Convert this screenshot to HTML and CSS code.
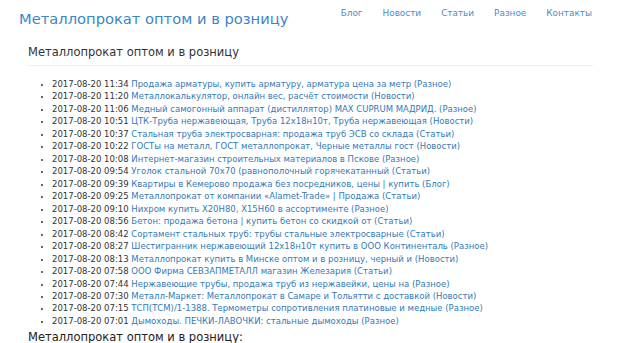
FILE: index.html
```html
<!DOCTYPE html>
<html lang="ru">
<head>
<meta charset="utf-8">
<title>Металлопрокат оптом и в розницу</title>
<link rel="stylesheet" href="styles.css">
</head>
<body>
<header class="top">
  <a class="brand" href="#">Металлопрокат оптом и в розницу</a>
  <nav class="nav">
    <a href="#">Блог</a>
    <a href="#">Новости</a>
    <a href="#">Статьи</a>
    <a href="#">Разное</a>
    <a href="#">Контакты</a>
  </nav>
</header>
<main class="content">
  <h2 class="head">Металлопрокат оптом и в розницу</h2>
  <ul class="posts">
    <li>2017-08-20 11:34 <a href="#">Продажа арматуры, купить арматуру, арматура цена за метр</a> <a href="#">(Разное)</a></li>
    <li>2017-08-20 11:20 <a href="#">Металлокалькулятор, онлайн вес, расчёт стоимости</a> <a href="#">(Новости)</a></li>
    <li>2017-08-20 11:06 <a href="#">Медный самогонный аппарат (дистиллятор) MAX CUPRUM МАДРИД.</a> <a href="#">(Разное)</a></li>
    <li>2017-08-20 10:51 <a href="#">ЦТК-Труба нержавеющая, Труба 12х18н10т, Труба нержавеющая</a> <a href="#">(Новости)</a></li>
    <li>2017-08-20 10:37 <a href="#">Стальная труба электросварная: продажа труб ЭСВ со склада</a> <a href="#">(Статьи)</a></li>
    <li>2017-08-20 10:22 <a href="#">ГОСТы на металл, ГОСТ металлопрокат, Черные металлы гост</a> <a href="#">(Новости)</a></li>
    <li>2017-08-20 10:08 <a href="#">Интернет-магазин строительных материалов в Пскове</a> <a href="#">(Разное)</a></li>
    <li>2017-08-20 09:54 <a href="#">Уголок стальной 70х70 (равнополочный горячекатанный</a> <a href="#">(Статьи)</a></li>
    <li>2017-08-20 09:39 <a href="#">Квартиры в Кемерово продажа без посредников, цены | купить</a> <a href="#">(Блог)</a></li>
    <li>2017-08-20 09:25 <a href="#">Металлопрокат от компании «Alamet-Trade» | Продажа</a> <a href="#">(Статьи)</a></li>
    <li>2017-08-20 09:10 <a href="#">Нихром купить Х20Н80, Х15Н60 в ассортименте</a> <a href="#">(Разное)</a></li>
    <li>2017-08-20 08:56 <a href="#">Бетон: продажа бетона | купить бетон со скидкой от</a> <a href="#">(Статьи)</a></li>
    <li>2017-08-20 08:42 <a href="#">Сортамент стальных труб: трубы стальные электросварные</a> <a href="#">(Статьи)</a></li>
    <li>2017-08-20 08:27 <a href="#">Шестигранник нержавеющий 12х18н10т купить в ООО Континенталь</a> <a href="#">(Разное)</a></li>
    <li>2017-08-20 08:13 <a href="#">Металлопрокат купить в Минске оптом и в розницу, черный и</a> <a href="#">(Новости)</a></li>
    <li>2017-08-20 07:58 <a href="#">ООО Фирма СЕВЗАПМЕТАЛЛ магазин Железария</a> <a href="#">(Статьи)</a></li>
    <li>2017-08-20 07:44 <a href="#">Нержавеющие трубы, продажа труб из нержавейки, цены на</a> <a href="#">(Разное)</a></li>
    <li>2017-08-20 07:30 <a href="#">Металл-Маркет: Металлопрокат в Самаре и Тольятти с доставкой</a> <a href="#">(Новости)</a></li>
    <li>2017-08-20 07:15 <a href="#">ТСП(ТСМ)/1-1388. Термометры сопротивления платиновые и медные</a> <a href="#">(Разное)</a></li>
    <li>2017-08-20 07:01 <a href="#">Дымоходы. ПЕЧКИ-ЛАВОЧКИ: стальные дымоходы</a> <a href="#">(Разное)</a></li>
  </ul>
  <h2 class="head2">Металлопрокат оптом и в розницу:</h2>
</main>
</body>
</html>
```
FILE: styles.css
```css
html, body {
  margin: 0;
  padding: 0;
  background: #fff;
}
body {
  font-family: "DejaVu Sans", sans-serif;
  color: #333;
  width: 620px;
  height: 343px;
  overflow: hidden;
}
a {
  color: #337ab7;
  text-decoration: none;
}
.top {
  display: flex;
  justify-content: space-between;
  align-items: flex-start;
  box-sizing: border-box;
  padding: 10px 28px 0 19px;
  height: 43px;
}
.brand {
  font-size: 14.7px;
  line-height: 18px;
  white-space: nowrap;
  color: #3a86c8;
}
.nav {
  display: flex;
  gap: 20px;
  font-size: 8.9px;
  line-height: 12px;
  margin-top: -3px;
  white-space: nowrap;
}
.nav a {
  color: #4a8dc9;
}
.content {
  margin: 0 27px;
}
.head {
  font-size: 11.5px;
  font-weight: normal;
  margin: 0;
  padding: 0 0 4px 1px;
  line-height: 18px;
  border-bottom: 1px solid #eee;
  color: #333;
}
.posts {
  margin: 12px 0 0 0;
  padding: 0 0 0 25px;
  font-size: 8.5px;
  line-height: 12.47px;
  color: #333;
}
.posts li::marker {
  font-size: 8px;
}
.head2 {
  font-size: 11.5px;
  font-weight: normal;
  margin: 1px 0 0 1px;
  line-height: 18px;
  color: #222;
}
```
